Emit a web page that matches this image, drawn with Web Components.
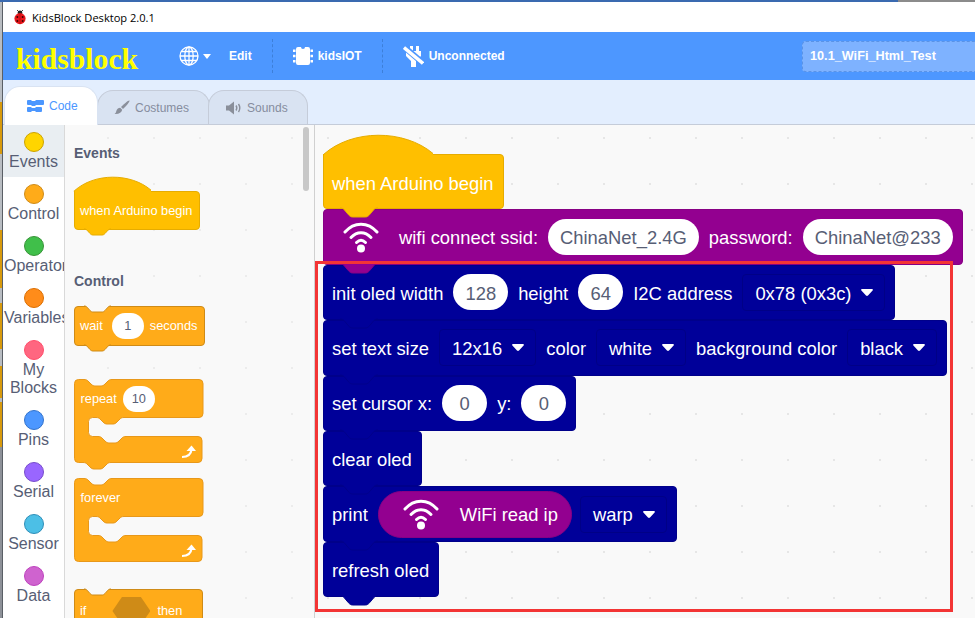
<!DOCTYPE html>
<html>
<head>
<meta charset="utf-8">
<title>KidsBlock Desktop</title>
<style>
	html, body { margin: 0; height: 100%; overflow: hidden; background: #fff; }
	body { display: flex; flex-direction: column; font-family: "Liberation Sans", Arial, sans-serif; }
</style>
</head>
<body>
<kb-edge></kb-edge>
<kb-frame>
	<kb-titlebar>KidsBlock Desktop 2.0.1</kb-titlebar>
	<kb-menubar></kb-menubar>
	<kb-tabs></kb-tabs>
	<kb-main>
		<kb-categories slot="left">
			<kb-category color="#ffd500" edge="#cca300" selected>Events</kb-category>
			<kb-category color="#ffab19" edge="#cf8b17">Control</kb-category>
			<kb-category color="#40bf4a" edge="#389438">Operators</kb-category>
			<kb-category color="#ff8c1a" edge="#db6e00">Variables</kb-category>
			<kb-category color="#ff6680" edge="#ff4d6a">My Blocks</kb-category>
			<kb-category color="#4c97ff" edge="#3373cc">Pins</kb-category>
			<kb-category color="#9966ff" edge="#774dcb">Serial</kb-category>
			<kb-category color="#4cbfe6" edge="#2e8eb8">Sensor</kb-category>
			<kb-category color="#cf63cf" edge="#bd42bd">Data</kb-category>
			<kb-category color="#4cbfe6" edge="#2e8eb8"></kb-category>
		</kb-categories>
		<kb-flyout slot="middle">
			<kb-heading>Events</kb-heading>
			<kb-block hat tab style="margin-top:29.7px;z-index:1">when Arduino begin</kb-block>
			<kb-heading style="margin-top:43px">Control</kb-heading>
			<kb-block notch tab color="#ffab19" edge="#cf8b17" style="margin-top:17px">wait <kb-field style="margin-left:3px">1</kb-field> seconds</kb-block>
			<kb-loop tab style="margin-top:33.7px">repeat <kb-field>10</kb-field></kb-loop>
			<kb-loop style="margin-top:15px">forever</kb-loop>
			<kb-block notch color="#ffab19" edge="#cf8b17" wide style="margin-top:27px">if <kb-hex></kb-hex> then</kb-block>
		</kb-flyout>
		<kb-workspace slot="right">
			<kb-block hat tab style="z-index:9">when Arduino begin</kb-block>
			<kb-block tab color="#930090" edge="#870084" style="z-index:8">
				<kb-wifi></kb-wifi>
				wifi connect ssid: <kb-field>ChinaNet_2.4G</kb-field> password: <kb-field>ChinaNet@233</kb-field>
			</kb-block>
			<kb-block tab style="z-index:7">init oled width <kb-field>128</kb-field> height <kb-field>64</kb-field> I2C address <kb-menu>0x78 (0x3c)</kb-menu></kb-block>
			<kb-block tab style="z-index:6">set text size <kb-menu>12x16</kb-menu> color <kb-menu>white</kb-menu> background color <kb-menu>black</kb-menu></kb-block>
			<kb-block tab style="z-index:5">set cursor x: <kb-field>0</kb-field> y: <kb-field>0</kb-field></kb-block>
			<kb-block tab style="z-index:4">clear oled</kb-block>
			<kb-block tab style="z-index:3">print <kb-reporter><kb-wifi></kb-wifi>WiFi read ip</kb-reporter> <kb-menu style="margin-left:-2px">warp</kb-menu></kb-block>
			<kb-block tab style="z-index:2">refresh oled</kb-block>
		</kb-workspace>
	</kb-main>
</kb-frame>

<script>
function define(name, css, html, init) {
	const t = document.createElement("template");
	t.innerHTML = `<style>${css}</style>${html}`;
	customElements.define(name, class extends HTMLElement {
		constructor() {
			super();
			this.attachShadow({mode: "open"});
			this.shadowRoot.appendChild(t.content.cloneNode(true));
		}
		connectedCallback() {
			if (init) init(this, this.shadowRoot);
		}
	});
}

const TAB_TOP = "M0 0c2 0 3 .5 4 1.500l4 4.500c1.500 1.500 2.500 2 4 2h12c1.500 0 2.500-.5 4-2l4-4.500c1-1 2-1.500 4-1.500";

// top edge of the desktop behind the window
define("kb-edge", `
	:host {
		display: block;
		flex: none;
		height: 2px;
		background: linear-gradient(90deg, #3a6ab0 0 898px, #8b8b8b 898px);
	}
`, ``);

// grey sliver of the desktop left of the window
define("kb-frame", `
	:host {
		display: flex;
		flex-direction: column;
		flex: 1;
		min-height: 0;
		padding-left: 3px;
		background: linear-gradient(180deg, #b9bdc2 0 100px, #d89a0c 100px 152px, #b9bdc2 152px 228px, #d89a0c 228px 286px, #b9bdc2 286px 301px, #d89a0c 301px 347px, #b9bdc2 347px 364px, #d89a0c 364px 396px, #b9bdc2 396px 400px, #d89a0c 400px 445px, #8d9198 445px) left top / 2px 100% no-repeat, #5a5f66;
	}
`, `<slot></slot>`);

define("kb-titlebar", `
	:host {
		display: flex;
		align-items: center;
		flex: none;
		height: 30px;
		padding-left: 10px;
		background: #fff;
		color: #000;
		font: 11.1px "Open Sans", "Noto Sans", sans-serif;
	}
	svg { width: 14px; height: 16px; margin-right: 5px; }
`, `
	<svg viewBox="0 0 14 16">
		<path d="M4 1l2 2M10 1L8 3" stroke="#444" fill="none"/>
		<circle cx="7" cy="4" r="2.4" fill="#222"/>
		<circle cx="7" cy="9.6" r="5.6" fill="#e8171c"/>
		<path d="M7 4v11" stroke="#a00" stroke-width=".6"/>
		<circle cx="4.4" cy="8" r="1" fill="#400"/><circle cx="9.6" cy="8" r="1" fill="#400"/>
		<circle cx="4.4" cy="12" r="1" fill="#400"/><circle cx="9.6" cy="12" r="1" fill="#400"/>
	</svg>
	<slot></slot>
`);

define("kb-menubar", `
	:host {
		display: flex;
		align-items: center;
		flex: none;
		height: 48px;
		padding-left: 13px;
		background: #4d97ff;
		color: #fff;
		font: bold 12px "Liberation Sans", Arial, sans-serif;
		overflow: hidden;
	}
	.logo {
		width: 122px;
		margin-top: 6px;
		color: #ff0;
		font: bold 29.7px "Liberation Serif", "Times New Roman", serif;
		white-space: nowrap;
	}
	.item { display: flex; align-items: center; height: 34px; }
	.sep { width: 0; height: 34px; border-left: 1px dashed #3d7fd9; }
	svg { display: block; flex: none; }
	.name {
		box-sizing: border-box;
		flex: none;
		width: 179px;
		height: 31px;
		margin-left: auto;
		margin-right: -6px;
		padding: 0 7px;
		display: flex;
		align-items: center;
		background: #7eb2ff;
		border: 1px dashed #5a93e6;
		border-radius: 4px;
		font-size: 12.7px;
		color: #fff;
	}
`, `
	<div class="logo">kidsblock</div>
	<div class="item" style="margin-left:41px">
		<svg width="20" height="20" viewBox="0 0 20 20" fill="none" stroke="#fff" stroke-width="1.3">
			<circle cx="10" cy="10" r="9"/><ellipse cx="10" cy="10" rx="4.2" ry="9"/>
			<path d="M10 1v18M1 10h18M2.4 5.5h15.2M2.4 14.5h15.2"/>
		</svg>
		<svg style="margin-left:4px" width="8" height="5" viewBox="0 0 8 5"><path d="M0 0h8L4 5z" fill="#fff"/></svg>
		<span style="margin-left:18px">Edit</span>
	</div>
	<div class="sep" style="margin-left:20px"></div>
	<div class="item" style="margin-left:20px">
		<svg width="20" height="20" viewBox="0 0 20 20" fill="#fff">
			<path d="M5 1h3a2 2 0 0 0 4 0h3a2 2 0 0 1 2 2v14a2 2 0 0 1-2 2H5a2 2 0 0 1-2-2V3a2 2 0 0 1 2-2z"/>
			<path d="M0 3.500h2.500v2.500H0zM0 8.800h2.500v2.500H0zM0 14h2.500v2.500H0zM17.500 3.500H20v2.500h-2.500zM17.500 8.800H20v2.500h-2.500zM17.500 14H20v2.500h-2.500z"/>
		</svg>
		<span style="margin-left:5px">kidsIOT</span>
	</div>
	<div class="sep" style="margin-left:20px"></div>
	<div class="item" style="margin-left:20px">
		<svg width="21" height="21" viewBox="0 0 21 21" fill="#fff">
			<path d="M7 0h3v5h3V0h3v5h2v5l-5 5v6H8v-6l-5-5V5h4z"/>
			<path d="M0 0L21 18" stroke="#4d97ff" stroke-width="6"/>
			<path d="M1 1.500L20 17.500" stroke="#fff" stroke-width="3.400"/>
		</svg>
		<span style="margin-left:5px">Unconnected</span>
	</div>
	<div class="name">10.1_WiFi_Html_Test</div>
`);

define("kb-tabs", `
	:host {
		display: flex;
		align-items: flex-end;
		flex: none;
		box-sizing: border-box;
		height: 45px;
		padding-left: 1px;
		background: #e3eefe;
		border-bottom: 1px solid #c5ccd9;
		font: 12px "Liberation Sans", Arial, sans-serif;
	}
	.tab {
		box-sizing: border-box;
		display: flex;
		align-items: center;
		height: 34px;
		padding-top: 1px;
		background: #d9e3f2;
		border: 1px solid #c5ccd9;
		border-bottom: 0;
		border-radius: 16px 16px 0 0;
		color: #868d9e;
	}
	.on {
		position: relative;
		z-index: 1;
		height: 39px;
		margin-bottom: -1px;
		padding: 0 0 0 22px;
		background: #fff;
		border-color: #d9e3f2;
		color: #4c97ff;
	}
	svg { display: block; margin-right: 5px; }
`, `
	<div class="tab on" style="width:94px">
		<svg width="17" height="12" viewBox="0 0 17 12" fill="#4c97ff"><path d="M1 0h3l1 1h3l1-1h7a1 1 0 0 1 1 1v3a1 1 0 0 1-1 1H9L8 6H5L4 5H1a1 1 0 0 1-1-1V1a1 1 0 0 1 1-1zM1 7h3l1 1h3l1-1h5a1 1 0 0 1 1 1v3a1 1 0 0 1-1 1H9l-1-1H5l-1 1H1a1 1 0 0 1-1-1V8a1 1 0 0 1 1-1z"/></svg>
		Code
	</div>
	<div class="tab" style="width:113px;padding-left:16px;margin-left:-1px">
		<svg width="16" height="16" viewBox="0 0 16 16" fill="#8a8f9a"><path d="M15.500.5c.5 1-3 5.500-6.500 8.500L7 7C10 4 14.500 0 15.500.500zM6.200 7.800l2 2c-.6 2.700-3 4.500-7.700 4.200 1.500-.8 1.500-2 2-3.500.5-1.500 2-2.500 3.700-2.700z"/></svg>
		Costumes
	</div>
	<div class="tab" style="width:100px;padding-left:17px;margin-left:-2px">
		<svg width="16" height="14" viewBox="0 0 16 14" fill="#8a8f9a"><path d="M0 4.500h3L8 .5v13l-5-4H0z"/><path d="M10 4.500c1 1.500 1 3.500 0 5M12.500 3c1.600 2.500 1.600 5.500 0 8" fill="none" stroke="#8a8f9a" stroke-width="1.400"/></svg>
		Sounds
	</div>
`);

define("kb-main", `
	:host { display: flex; flex: 1; min-height: 0; background: #fff; }
	.left { display: block; flex: none; width: 61px; border-right: 1px solid #d9d9d9; }
	.middle { display: block; flex: none; width: 249px; border-right: 1px solid #d0d0d0; }
	.right { display: block; flex: 1; min-width: 0; }
`, `
	<div class="left"><slot name="left"></slot></div>
	<div class="middle"><slot name="middle"></slot></div>
	<div class="right"><slot name="right"></slot></div>
`);

define("kb-categories", `
	:host { display: block; height: 100%; overflow: hidden; background: #fff; }
`, `<slot></slot>`);

define("kb-category", `
	:host {
		display: block;
		padding: 7px 0;
		color: #575e75;
		font: 16px/18px "Liberation Sans", Arial, sans-serif;
		text-align: center;
		overflow: hidden;
	}
	:host([selected]) { background: #e9eef2; }
	i {
		display: block;
		box-sizing: border-box;
		width: 20px;
		height: 20px;
		margin: 0 auto;
		border-radius: 50%;
		border: 1px solid;
	}
	div { position: relative; top: 1px; width: 100%; padding: 0 1px; box-sizing: border-box; }
`, `<i></i><div><slot></slot></div>`, (el, root) => {
	const dot = root.querySelector("i");
	dot.style.background = el.getAttribute("color");
	dot.style.borderColor = el.getAttribute("edge");
});

define("kb-flyout", `
	:host {
		--bh: 39.5px;
		--pad-l: 5.5px;
		--pad-r: 6.5px;
		--gap: 6px;
		--fs: 12.8px;
		--fh: 26px;
		--fp: 8px;
		--fmin: 32px;
		--ty: 1px;
		--mp: 8px;
		--tab-x: 10px;
		--tab-w: 27px;
		--tab-d: 6px;
		--cap-w: 77px;
		--cap-h: 13.500px;
		position: relative;
		display: block;
		box-sizing: border-box;
		height: 100%;
		padding: 20px 0 0 8.500px;
		overflow: hidden;
		background: #f9f9f9 radial-gradient(circle, #ececec 1px, transparent 1.200px) -26px -10px / 46px 46px;
	}
	.bar {
		position: absolute;
		top: 2px;
		right: 5px;
		width: 6px;
		height: 64px;
		border-radius: 3px;
		background: #c8c8c8;
	}
`, `<slot></slot><div class="bar"></div>`);

define("kb-heading", `
	:host {
		display: block;
		margin-left: 0.500px;
		color: #575e75;
		font: bold 14px/16px "Liberation Sans", Arial, sans-serif;
	}
`, `<slot></slot>`);

define("kb-workspace", `
	:host {
		--bh: 55.400px;
		--pad-l: 8px;
		--pad-r: 9px;
		--gap: 10px;
		--fs: 18.4px;
		--fh: 36px;
		--fp: 12px;
		--fmin: 45px;
		--ty: 2.600px;
		--tab-x: 16.500px;
		--tab-w: 38px;
		--tab-d: 9px;
		--cap-w: 110px;
		--cap-h: 19px;
		position: relative;
		display: block;
		box-sizing: border-box;
		height: 100%;
		padding: 29px 0 0 8px;
		overflow: hidden;
		background: #f9f9f9 radial-gradient(circle, #e6e6e6 1px, transparent 1.200px) -10px -10px / 46px 46px;
	}
	.mark {
		position: absolute;
		z-index: 20;
		left: 0;
		top: 136px;
		width: 632px;
		height: 345px;
		border: 3px solid #f33535;
		pointer-events: none;
	}
`, `<slot></slot><div class="mark"></div>`);

define("kb-block", `
	:host {
		position: relative;
		display: block;
		width: max-content;
		color: #fff;
		font: var(--fs)/1 "Liberation Sans", Arial, sans-serif;
		white-space: nowrap;
	}
	.body {
		box-sizing: border-box;
		display: flex;
		align-items: center;
		gap: var(--gap);
		height: var(--bh);
		padding: var(--ty) var(--pad-r) 0 var(--pad-l);
		border: 1px solid var(--edge);
		border-radius: 4px;
		background: var(--fill);
	}
	::slotted(*) { margin-top: calc(0px - var(--ty)); }
	:host([hat]) .body { border-top-left-radius: 0; padding-top: calc(var(--ty) * 2); }
	:host([wide]) .body { width: 129px; height: 43px; }
	svg { position: absolute; display: block; overflow: visible; }
	.tab, .notch { left: var(--tab-x); width: var(--tab-w); height: var(--tab-d); display: none; }
	.tab { top: calc(100% - 1px); }
	.notch { top: 0; }
	:host([tab]) .tab, :host([notch]) .notch { display: block; }
	.cap { left: 0; bottom: 100%; width: var(--cap-w); height: var(--cap-h); display: none; }
	:host([hat]) .cap { display: block; }
`, `
	<div class="body"><slot></slot></div>
	<svg class="cap" viewBox="0 0 110 19" preserveAspectRatio="none"><path d="M.5 19.500C29-6 81-6 110 18.500V21H.5z" fill="var(--fill)"/><path d="M.5 19.500C29-6 81-6 110 18.500" fill="none" stroke="var(--edge)" vector-effect="non-scaling-stroke"/><path d="M.5 19v2" stroke="var(--edge)" vector-effect="non-scaling-stroke"/></svg>
	<svg class="tab" viewBox="0 0 36 8" preserveAspectRatio="none"><path d="${TAB_TOP}z" fill="var(--fill)"/><path d="${TAB_TOP}" fill="none" stroke="var(--edge)" vector-effect="non-scaling-stroke"/></svg>
	<svg class="notch" viewBox="0 0 36 8" preserveAspectRatio="none"><path d="${TAB_TOP}z" fill="#f9f9f9"/><path d="${TAB_TOP}" fill="none" stroke="var(--edge)" vector-effect="non-scaling-stroke"/></svg>
`, el => {
	const hat = el.hasAttribute("hat");
	el.style.setProperty("--fill", el.getAttribute("color") || (hat ? "#ffbf00" : "#000099"));
	el.style.setProperty("--edge", el.getAttribute("edge") || (hat ? "#e6ac00" : "#00008a"));
});

const LOOP_TOP = "M.5 4.500a4 4 0 0 1 4-4H10c2 0 3 .5 4 1.500l3 3c1.500 1.500 2.500 2 4 2h6c1.500 0 2.500-.5 4-2l3-3c1-1 2-1.500 4-1.500h87a4 4 0 0 1 4 4v30a4 4 0 0 1-4 4H50c-2 0-3 .5-4 1.500l-3 3c-1.500 1.500-2.500 2-4 2h-6c-1.500 0-2.500-.5-4-2l-3-3c-1-1-2-1.500-4-1.500h-3.500a4 4 0 0 0-4 4v11a4 4 0 0 0 4 4H24c2 0 3 .5 4 1.500l3 3c1.500 1.500 2.500 2 4 2h6c1.500 0 2.500-.5 4-2l3-3c1-1 2-1.500 4-1.500h72a4 4 0 0 1 4 4v18a4 4 0 0 1-4 4";
const LOOP_TAB = "H37c-2 0-3 .5-4 1.500l-3 3c-1.500 1.500-2.500 2-4 2h-6c-1.500 0-2.500-.5-4-2l-3-3c-1-1-2-1.500-4-1.500H4.500a4 4 0 0 1-4-4z";
const LOOP_FLAT = "H4.500a4 4 0 0 1-4-4z";

define("kb-loop", `
	:host {
		position: relative;
		display: block;
		width: 129px;
		height: 84px;
		color: #fff;
		font: var(--fs)/1 "Liberation Sans", Arial, sans-serif;
		white-space: nowrap;
	}
	svg { position: absolute; left: 0; top: 0; overflow: visible; }
	.label {
		position: relative;
		display: flex;
		align-items: center;
		gap: var(--gap);
		height: 39px;
		padding: var(--ty) 0 0 7px;
		box-sizing: border-box;
	}
	::slotted(*) { margin-top: calc(0px - var(--ty)); }
`, `
	<svg width="129" height="90" viewBox="0 0 129 90">
		<path class="shape" fill="#ffab19" stroke="#e8981a"/>
		<path d="M108 78c5 0 9-2 9.500-7.500" fill="none" stroke="#fff" stroke-width="2.200"/>
		<path d="M112.500 72l5-5.500 4.500 5.500z" fill="#fff"/>
	</svg>
	<div class="label"><slot></slot></div>
`, (el, root) => {
	root.querySelector(".shape").setAttribute("d", LOOP_TOP + (el.hasAttribute("tab") ? LOOP_TAB : LOOP_FLAT));
});

define("kb-field", `
	:host {
		box-sizing: border-box;
		display: inline-flex;
		align-items: center;
		justify-content: center;
		flex: none;
		height: var(--fh);
		min-width: var(--fmin);
		padding: var(--ty) var(--fp) 0;
		border-radius: calc(var(--fh) / 2);
		background: #fff;
		color: #575e75;
	}
`, `<slot></slot>`);

define("kb-menu", `
	:host {
		box-sizing: border-box;
		display: inline-flex;
		align-items: center;
		gap: 10px;
		flex: none;
		height: 37px;
		padding: var(--ty) 11px 0 12px;
		border: 1px solid #000086;
		border-radius: 4px;
		color: #fff;
	}
	svg { display: block; margin-top: calc(0px - var(--ty)); }
`, `<slot></slot><svg width="12" height="7" viewBox="0 0 12 7"><path d="M1.200 0h9.600c1 0 1.400 1 .8 1.600L7 6.500c-.6.600-1.400.600-2 0L.4 1.600C-.2 1 .2 0 1.200 0z" fill="#fff"/></svg>`);

define("kb-reporter", `
	:host {
		box-sizing: border-box;
		display: inline-flex;
		align-items: center;
		flex: none;
		height: 47px;
		padding: var(--ty) 13px 0 24px;
		gap: 21px;
		border: 1px solid #870084;
		border-radius: 24px;
		background: #930090;
		color: #fff;
	}
	::slotted(*) { margin-top: calc(0px - var(--ty)) !important; }
`, `<slot></slot>`);

define("kb-wifi", `
	:host { display: block; flex: none; width: 36px; height: 32px; margin: 0 10px 0 11px; }
	:host-context(kb-reporter) { margin: 0; }
	svg { display: block; }
`, `
	<svg width="36" height="32" viewBox="0 0 36 32" fill="none" stroke="#fff" stroke-width="3" stroke-linecap="round">
		<path d="M2 11C11 .500 25 .500 34 11"/>
		<path d="M8 16.500c6-6.500 14-6.500 20 0"/>
		<path d="M13.500 21.500c3-3 6-3 9 0"/>
		<circle cx="18" cy="27.500" r="4" fill="#fff" stroke="none"/>
	</svg>
`);

define("kb-hex", `
	:host {
		display: block;
		flex: none;
		width: 38px;
		height: 28px;
		margin-left: 20px;
		margin-right: 1px;
		background: #cf8b17;
		clip-path: polygon(25% 0, 75% 0, 100% 50%, 75% 100%, 25% 100%, 0 50%);
	}
`, ``);
</script>
</body>
</html>
